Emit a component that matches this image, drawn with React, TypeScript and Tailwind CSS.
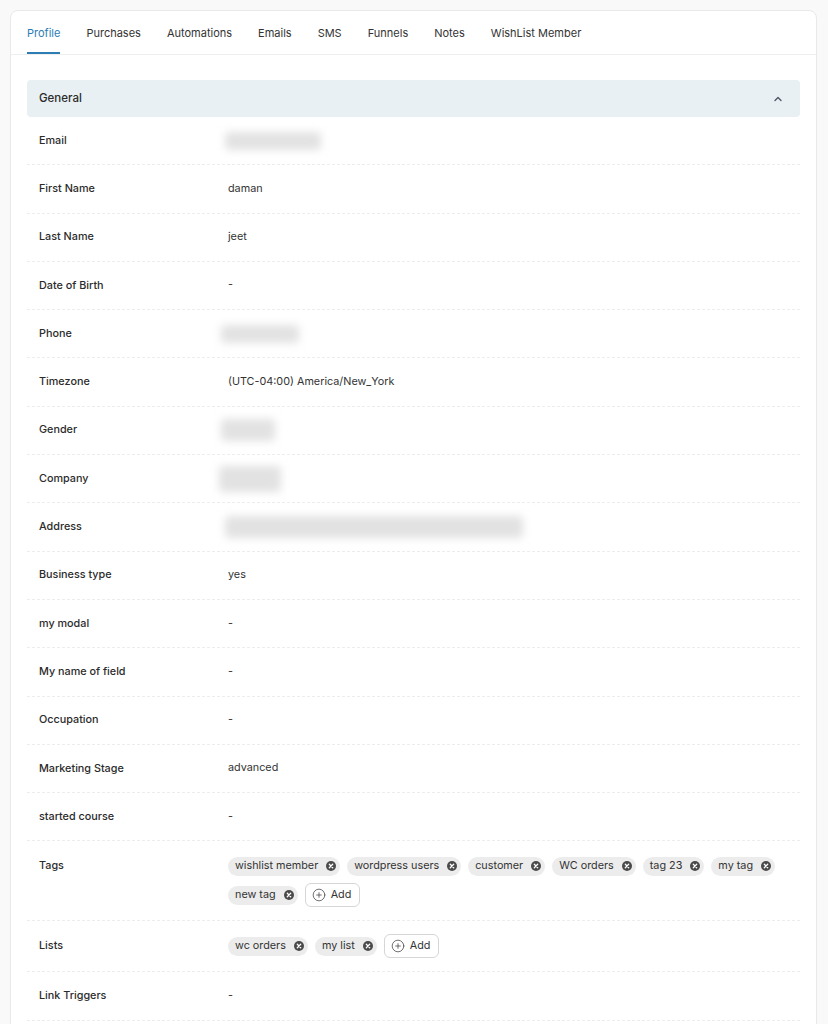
import { ChevronUp, CirclePlus } from 'lucide-react';

const tabs = ['Profile', 'Purchases', 'Automations', 'Emails', 'SMS', 'Funnels', 'Notes', 'WishList Member'];

type Field = { label: string; value?: string; blur?: string };

const fields: Field[] = [
  { label: 'Email', blur: 'w-[96px] -ml-[3px]' },
  { label: 'First Name', value: 'daman' },
  { label: 'Last Name', value: 'jeet' },
  { label: 'Date of Birth', value: '-' },
  { label: 'Phone', blur: 'w-[78px] -ml-[7px]' },
  { label: 'Timezone', value: '(UTC-04:00) America/New_York' },
  { label: 'Gender', blur: 'w-[54px] -ml-[7px] h-[22px]' },
  { label: 'Company', blur: 'w-[62px] -ml-[9px] h-[26px]' },
  { label: 'Address', blur: 'w-[298px] -ml-[3px] h-[22px]' },
  { label: 'Business type', value: 'yes' },
  { label: 'my modal', value: '-' },
  { label: 'My name of field', value: '-' },
  { label: 'Occupation', value: '-' },
  { label: 'Marketing Stage', value: 'advanced' },
  { label: 'started course', value: '-' },
];

const tags = ['wishlist member', 'wordpress users', 'customer', 'WC orders', 'tag 23', 'my tag', 'new tag'];
const lists = ['wc orders', 'my list'];

function RemoveIcon() {
  return (
    <svg width="10" height="10" viewBox="0 0 10 10" className="shrink-0">
      <circle cx="5" cy="5" r="5" fill="#4a4a4a" />
      <path d="M3.3 3.3 L6.7 6.7 M6.7 3.3 L3.3 6.7" stroke="#fff" strokeWidth="1.3" strokeLinecap="round" />
    </svg>
  );
}

function Chip({ text }: { text: string }) {
  return (
    <span className="inline-flex items-center gap-[8px] h-[19px] rounded-full bg-[#ececec] pl-[7px] pr-[4px] text-[#333]">
      {text}
      <RemoveIcon />
    </span>
  );
}

function AddButton() {
  return (
    <button className="inline-flex items-center gap-[5px] h-6 rounded-md border border-[#d6d6d6] bg-white pl-[6px] pr-[8px] text-[#333]">
      <CirclePlus size={14} strokeWidth={1.3} color="#444" />
      Add
    </button>
  );
}

function Row({ label, children, tall }: { label: string; children: React.ReactNode; tall?: boolean }) {
  return (
    <div
      className={
        tall
          ? 'flex items-start py-[13px] pl-3 border-b border-dashed border-[#ededed]'
          : 'flex items-center h-[48.3px] pl-3 border-b border-dashed border-[#ededed]'
      }
    >
      <div className="w-[189px] shrink-0 font-medium text-[#2b2b2b] leading-6">{label}</div>
      <div className="flex-1 text-[#333]">{children}</div>
    </div>
  );
}

export default function App() {
  return (
    <div className="min-h-screen bg-[#f9f9f9] pt-[10px] pl-[10px] text-[10.8px]" style={{ fontFamily: 'Inter, "Liberation Sans", sans-serif' }}>
      <div className="w-[807px] min-h-[1040px] rounded-lg border border-[#e9e9e9] bg-white">
        {/* tabs */}
        <div className="flex h-[44px] gap-[26px] px-4 border-b border-[#efefef] text-[11px]">
          {tabs.map((t, i) => (
            <div
              key={t}
              className={
                i === 0
                  ? 'flex items-center h-full pt-[4px] border-b-2 border-[#2b7db3] text-[#2b7db3]'
                  : 'flex items-center h-full pt-[4px] border-b-2 border-transparent text-[#333]'
              }
            >
              {t}
            </div>
          ))}
        </div>

        <div className="px-4 pt-[25px]">
          {/* section header */}
          <div className="flex items-center justify-between h-[37px] rounded-sm bg-[#e8f0f3] pl-3 pr-[16px]">
            <span className="font-medium text-[11.5px] text-[#2b2b2b]">General</span>
            <ChevronUp size={12} strokeWidth={2.6} color="#4b5563" />
          </div>

          {fields.map((f) => (
            <Row key={f.label} label={f.label}>
              {f.blur ? (
                <div className={`h-[18px] rounded bg-[#e2e2e2] blur-[4px] ${f.blur}`} />
              ) : (
                f.value
              )}
            </Row>
          ))}

          <Row label="Tags" tall>
            <div className="flex flex-wrap items-center gap-x-[7px] gap-y-[5px]">
              {tags.map((t) => (
                <div key={t} className="h-6 flex items-center">
                  <Chip text={t} />
                </div>
              ))}
              <AddButton />
            </div>
          </Row>

          <Row label="Lists" tall>
            <div className="flex flex-wrap items-center gap-x-[7px] gap-y-[5px]">
              {lists.map((t) => (
                <div key={t} className="h-6 flex items-center">
                  <Chip text={t} />
                </div>
              ))}
              <AddButton />
            </div>
          </Row>

          <Row label="Link Triggers">-</Row>
        </div>
      </div>
    </div>
  );
}
